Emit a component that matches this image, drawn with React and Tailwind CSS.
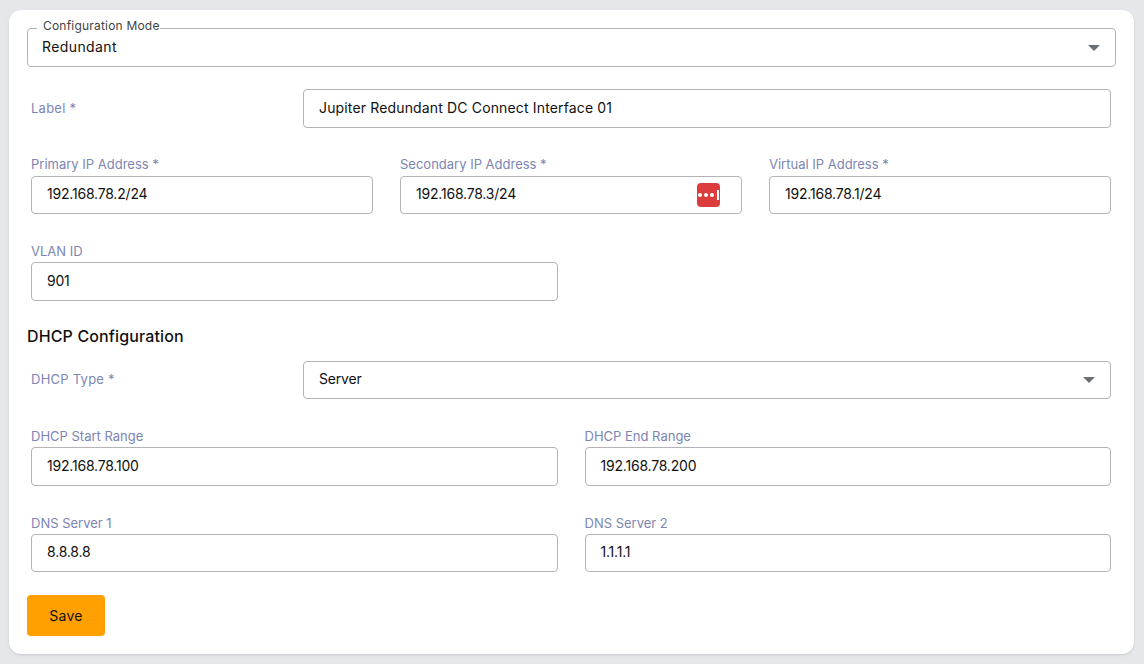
const labelCls = "block text-[13px] leading-[18px] text-[#7c85b3]";
const inputCls = "flex items-center w-full rounded border border-[#b3b3b8] bg-white px-[15px] text-sm text-[#111]";

function Caret() {
  return (
    <svg width="12" height="6" viewBox="0 0 12 6">
      <path d="M0 0h12L6 6z" fill="#6b6f76" />
    </svg>
  );
}

function Field({ label, value, tall, first, children }) {
  return (
    <div>
      <span className={labelCls + (first ? " pb-[1px]" : " pt-[1px]")}>{label}</span>
      <div className={inputCls + " justify-between mt-[2px] " + (tall ? "h-[39px]" : "h-[38px]")}>
        <span className="pb-[2px] tracking-[-0.2px]">{value}</span>
        {children}
      </div>
    </div>
  );
}

function PasswordBadge() {
  return (
    <span className="flex items-center justify-center gap-[2px] w-[23px] h-6 mr-[6px] rounded bg-[#dc3c3c]">
      <span className="w-1 h-1 rounded-full bg-white"></span>
      <span className="w-1 h-1 rounded-full bg-white"></span>
      <span className="w-1 h-1 rounded-full bg-white"></span>
      <span className="w-[2px] h-[10px] ml-[1px] bg-white"></span>
    </span>
  );
}

export default function App() {
  return (
    <div className="min-h-[664px] bg-[#e5e7eb] pt-[10px] pl-[9px] pr-[10px] font-['Inter',sans-serif]">
      <div className="h-[644px] rounded-xl bg-white pt-[18px] px-[18px] shadow-sm">
        {/* Configuration mode */}
        <fieldset className="relative flex items-center justify-between w-[1089px] h-[39px] rounded border border-[#b3b3b8] pl-[14px] pr-[15px] text-sm tracking-[0.4px] text-[#111]">
          <legend className="absolute -top-[11px] left-[9px] text-[12px] leading-4 tracking-[0.2px] text-[#444]">
            <span className="bg-white pl-[6px]">Configuration Mode</span>
          </legend>
          <span className="pb-[1px]">Redundant</span>
          <Caret />
        </fieldset>

        <div className="ml-1 w-[1080px]">
          <div className="flex items-center mt-[22px]">
            <span className={labelCls + " w-[272px] pb-[2px] tracking-[0.25px]"}>Label *</span>
            <div className={inputCls + " flex-1 h-[39px] tracking-[0.15px]"}>
              <span className="pb-[2px]">Jupiter Redundant DC Connect Interface 01</span>
            </div>
          </div>

          <div className="grid grid-cols-3 gap-x-[27px] mt-[27px]">
            <Field first label="Primary IP Address *" value="192.168.78.2/24" />
            <Field first label="Secondary IP Address *" value="192.168.78.3/24">
              <PasswordBadge />
            </Field>
            <Field first label="Virtual IP Address *" value="192.168.78.1/24" />
          </div>

          <div className="grid grid-cols-2 gap-x-[27px] mt-[27px]">
            <Field label="VLAN ID" value="901" tall />
          </div>
        </div>

        <h2 className="mt-[23px] text-base leading-6 tracking-[0.13px] text-[#111] font-medium">DHCP Configuration</h2>

        <div className="ml-1 w-[1080px]">
          <div className="flex items-center mt-[13px]">
            <span className={labelCls + " w-[272px] pb-[2px] tracking-[0.25px]"}>DHCP Type *</span>
            <div className={inputCls + " flex-1 h-[38px] justify-between"}>
              <span className="pb-[2px] tracking-[-0.2px]">Server</span>
              <Caret />
            </div>
          </div>

          <div className="grid grid-cols-2 gap-x-[27px] gap-y-[27px] mt-[27px]">
            <Field label="DHCP Start Range" value="192.168.78.100" tall />
            <Field label="DHCP End Range" value="192.168.78.200" tall />
            <Field label="DNS Server 1" value="8.8.8.8" />
            <Field label="DNS Server 2" value="1.1.1.1" />
          </div>
        </div>

        <button className="block w-[78px] h-[41px] mt-[23px] rounded bg-[#ff9f00] text-sm tracking-[0.3px] text-[#111]">Save</button>
      </div>
    </div>
  );
}
